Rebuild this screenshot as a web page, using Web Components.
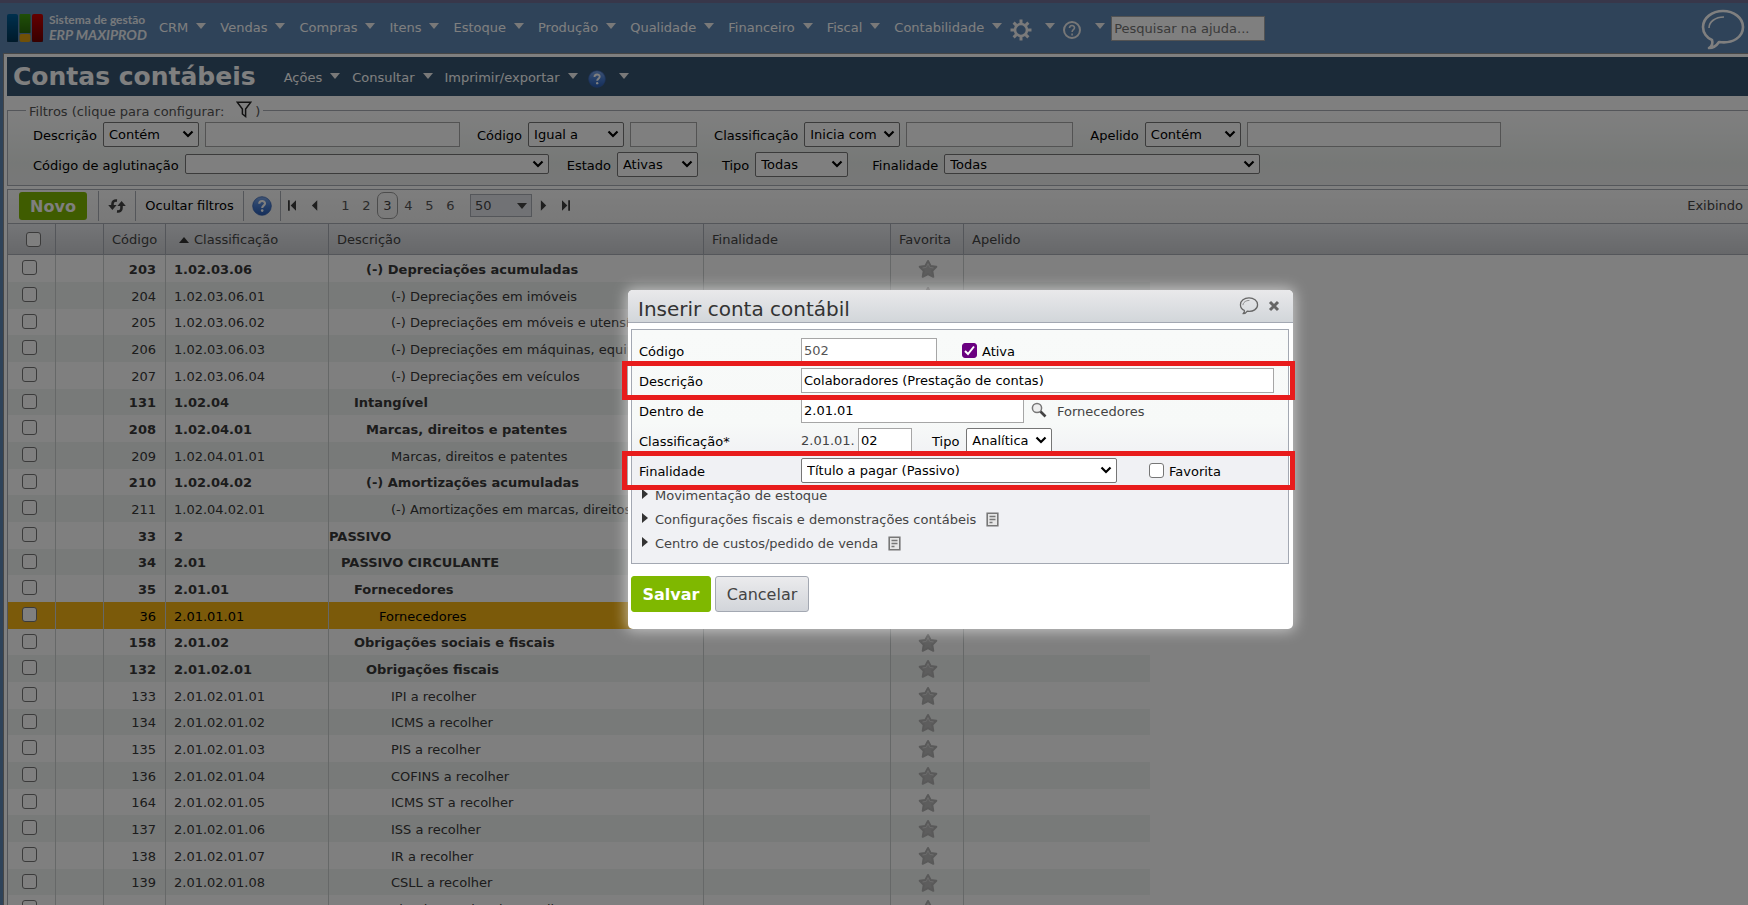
<!DOCTYPE html>
<html lang="pt-BR">
<head>
<meta charset="utf-8">
<title>Contas contábeis</title>
<style>
html,body{margin:0;height:100%;overflow:hidden}
body{font-family:"DejaVu Sans",Verdana,sans-serif;font-size:13px;color:#000;background:#5e86b2}
</style>
</head>
<body>
<erp-app></erp-app>
<script>
const FIELD_CSS = `
*{box-sizing:border-box}
input,select,button{font:inherit;color:inherit;margin:0}
input[type=text],input[type=search]{border:1px solid #a6a6a6;background:#fff;height:25px;padding:0 2px;border-radius:0;outline:0}
.sel{display:inline-grid;height:25px;align-items:center}
.sel>*{grid-area:1/1}
.sel select{appearance:none;width:100%;height:100%;border:1px solid #767676;border-radius:2px;background:#fff;color:#000;padding:0 18px 0 5px;outline:0}
.sel svg{justify-self:end;margin-right:5px;width:12px;height:8px;pointer-events:none}
.sel.low{height:20px}
input[type=checkbox]{appearance:none;width:15px;height:15px;border:1px solid #767676;border-radius:3px;background:#fff;display:grid;place-items:center;flex:none}
`;
const CHEV = `<svg viewBox="0 0 12 8" aria-hidden="true"><path d="M1.5 1.5 6 6l4.5-4.5" fill="none" stroke="#000" stroke-width="2.2"/></svg>`;
const HELP = `<svg viewBox="0 0 20 20" width="100%" height="100%" aria-hidden="true"><defs><linearGradient id="g" x2="0" y2="1"><stop stop-color="#7ea6e6"/><stop offset=".5" stop-color="#4a7fd4"/><stop offset="1" stop-color="#2a5cb4"/></linearGradient></defs><circle cx="10" cy="10" r="9.3" fill="url(#g)" stroke="#3a66b4" stroke-width=".8"/><path d="M7.2 7.8c0-3.6 5.8-3.6 5.8-.3 0 2.1-2.8 2.2-2.8 4.4" fill="none" stroke="#fff" stroke-width="2.1"/><circle cx="10.2" cy="14.6" r="1.3" fill="#fff"/></svg>`;
const BUBBLE = `<svg viewBox="0 0 44 42" width="100%" height="100%" aria-hidden="true"><path d="M22 2C11 2 2 9 2 18c0 6 4 11 9 13 1 3 0 6-3 8 5 0 8-3 10-6 14 2 24-5 24-15C42 9 33 2 22 2z" fill="none" stroke="currentColor" stroke-width="var(--stroke,2.6)" stroke-linejoin="round"/><path d="M8 19c0-6 6-11 15-11" fill="none" stroke="currentColor" stroke-width="1.6"/></svg>`;
const NOTE = `<svg class="note" viewBox="0 0 13 15" aria-hidden="true"><path d="M1.2 1.2h10.6v12.6H1.2z" fill="#e6e6e6" stroke="#777" stroke-width="1.6"/><path d="M3.5 4.5h6M3.5 7.5h6M3.5 10.5h3" stroke="#777" stroke-width="1.4"/></svg>`;

function define(name, render) {
  customElements.define(name, class extends HTMLElement {
    connectedCallback() {
      if (this.shadowRoot) return;
      this.attachShadow({ mode: 'open' }).innerHTML = render(this);
    }
  });
}
const options = list => list.split('|').map(o => `<option>${o}</option>`).join('');

/* Menu entry: slotted label or icon, followed by a drop arrow */
define('menu-item', () => `<style>
:host{display:block;color:#fff}
a{display:flex;align-items:center;gap:8px;color:inherit;text-decoration:none;line-height:18px;white-space:nowrap}
i{width:0;height:0;border:5px solid transparent;border-top:6px solid #f2f2f2;border-bottom:0;margin-bottom:4px}
:host([wide]) a{gap:13px}
</style><a href="#"><slot></slot><i></i></a>`);

define('erp-logo', () => `<style>
:host{display:flex;align-items:center;gap:6px;width:136px;color:#fff;font-family:Lato,sans-serif;font-weight:700}
svg{width:36px;height:28px;flex:none}
div{font-size:12px;line-height:15px;white-space:nowrap;opacity:.9;margin-top:-3px}
em{display:block;font-size:14px}
</style><svg viewBox="0 0 36 28" aria-hidden="true"><defs><linearGradient id="d" x2="0" y2="1"><stop stop-opacity="0"/><stop offset="1" stop-opacity=".45"/></linearGradient></defs><rect width="11" height="28" rx="2" fill="#00609c"/><rect x="12.500" width="11" height="19" rx="1" fill="#3f9d10"/><rect x="12.500" y="20" width="11" height="8" rx="2" fill="#e0a010"/><rect x="25" width="11" height="28" rx="2" fill="#c80000"/><path d="M0 0h11v28H0zM12.500 0h11v19h-11zM25 0h11v28H25z" fill="url(#d)"/></svg><div>Sistema de gestão<em>ERP MAXIPROD</em></div>`);

define('top-nav', () => `<style>${FIELD_CSS}
:host{display:flex;align-items:center;height:53px;box-sizing:border-box;border-top:3px solid #706f94;background:#5e86b2;padding:0 3px 0 7px}
nav{display:flex;align-items:center;gap:14px;margin-left:16px}
.gear{width:22px;height:22px;margin:4px 0 0 -6px}.q{width:20px;height:20px;margin:4px 0 0 -7px}
input[type=search]{width:154px;margin-left:-8px}
input::placeholder{color:#757575;opacity:1}
.chat{margin-left:auto;width:44px;height:42px;margin-top:4px;color:#fff;background:none;border:0;padding:0}
</style><erp-logo></erp-logo><nav>
${['CRM','Vendas','Compras','Itens','Estoque','Produção','Qualidade','Financeiro','Fiscal','Contabilidade'].map(t=>`<menu-item>${t}</menu-item>`).join('')}
<menu-item wide><svg class="gear" viewBox="0 0 22 22" aria-label="Configurações"><circle cx="11" cy="11" r="6" fill="none" stroke="#f4f4f4" stroke-width="2.600"/><path d="M11 .5v4M11 17.500v4M.5 11h4M17.500 11h4M3.600 3.600l2.800 2.800M15.600 15.600l2.800 2.800M18.400 3.600l-2.800 2.800M6.400 15.600l-2.800 2.800" stroke="#f4f4f4" stroke-width="3"/></svg></menu-item>
<menu-item wide><svg class="q" viewBox="0 0 20 20" aria-label="Ajuda"><circle cx="10" cy="10" r="8" fill="none" stroke="#eee" stroke-width="2"/><path d="M7.500 8c0-3.300 5-3.300 5-.3 0 2-2.400 2-2.400 4.300M10.100 13.500v2" fill="none" stroke="#eee" stroke-width="1.600"/></svg></menu-item>
<input type="search" placeholder="Pesquisar na ajuda..." aria-label="Pesquisar na ajuda">
</nav><button class="chat" aria-label="Mensagens">${BUBBLE}</button>`);

define('page-bar', () => `<style>
:host{display:flex;align-items:center;height:39px;background:#365470;color:#fff;padding-left:6px}
h1{margin:0;font-size:25px;line-height:39px;font-weight:700;white-space:nowrap}
nav{display:flex;align-items:center;gap:12px;margin:2px 0 0 28px}
.h{width:18px;height:18px;margin:2px 0 0 -2px;display:block}
</style><h1>Contas contábeis</h1><nav><menu-item>Ações</menu-item><menu-item>Consultar</menu-item><menu-item>Imprimir/exportar</menu-item><menu-item wide><span class="h">${HELP}</span></menu-item></nav>`);

/* Filter: label, operator or value select, optional text box */
define('filter-field', el => {
  const label = el.getAttribute('label'), box = el.getAttribute('box');
  return `<style>${FIELD_CSS}
:host{display:flex;align-items:center;gap:6px;height:26px}
label{white-space:nowrap;padding-top:2px}
</style><label for="s">${label}</label><span class="sel ${el.hasAttribute('low')?'low':''}" style="width:${el.getAttribute('w')}px"><select id="s">${options(el.getAttribute('options')||'')}</select>${CHEV}</span>${box?`<input type="text" aria-label="${label}" style="width:${box}px">`:''}`;
});

define('filter-panel', () => `<style>
:host{display:block}
fieldset{margin:5px 0 0;border:1px solid #a9acb4;border-right:0;padding:1px 0 8px 25px;min-width:0;background:linear-gradient(#fff,#f8faf9 30%,#edf1ee 70%,#f0f1f1)}
legend{margin-left:-7px;padding:2px 3px 0;line-height:17px;height:17px;color:#555;display:flex;gap:12px}
legend svg{width:16px;height:17px;margin-top:-2px}
legend span{margin-left:-9px}
div{display:flex;gap:17px}
div+div{margin-top:4px}
.l{gap:18px}
.t{margin-left:6px}
</style><fieldset><legend>Filtros (clique para configurar: <svg viewBox="0 0 16 17" aria-hidden="true"><path d="M1.200 1.200h13.600L9.600 8v7.500L6.400 13V8z" fill="none" stroke="#222" stroke-width="1.500"/></svg><span>)</span></legend>
<div><filter-field label="Descrição" w="96" box="255" options="Contém"></filter-field><filter-field label="Código" w="96" box="67" options="Igual a"></filter-field><filter-field label="Classificação" w="96" box="167" options="Inicia com"></filter-field><filter-field label="Apelido" w="96" box="254" options="Contém"></filter-field></div>
<div class="l"><filter-field low label="Código de aglutinação" w="364"></filter-field><filter-field label="Estado" w="81" options="Ativas"></filter-field><filter-field class="t" label="Tipo" w="93" options="Todas"></filter-field><filter-field class="t" low label="Finalidade" w="316" options="Todas"></filter-field></div></fieldset>`);

define('grid-toolbar', () => `<style>${FIELD_CSS}
:host{display:flex;align-items:center;height:34px;box-sizing:border-box;margin-top:3px;border:1px solid #a9acb4;border-width:1px 0 0 1px;background:linear-gradient(#fcfcfc,#f2f2f2);padding:0 5px 2px 11px}
button{border:0;background:none;padding:0;display:block;white-space:nowrap}
.new{width:68px;height:28px;border-radius:3px;background:#7fb800;color:#fff;font-size:16px;font-weight:700;padding-top:2px}
.g{height:30px;display:flex;align-items:center;border-right:1px solid #a9acb4}
.g.a{width:12px}.g.b{width:37px;justify-content:center}.g.c{width:108px;justify-content:center}
.help{width:20px;height:20px}
.i{width:8px;height:11px}.i svg,.r svg{display:block;width:100%;height:100%}
.r{width:18px;height:14px}
nav{display:flex;margin:0 9px 0 16px}
nav a{width:21px;height:27px;line-height:27px;text-align:center;color:#555;text-decoration:none}
nav a[aria-current]{border:1px solid #999;border-radius:7px;line-height:25px;color:#444}
.page{width:62px;height:23px;margin-right:8px}
.page select{background:#e3e5ea;border-color:#a9acb4;border-radius:0;color:#444;padding-left:4px}
.page i{justify-self:end;margin-right:5px;border:5px solid transparent;border-top:6px solid #444;border-bottom:0;pointer-events:none}
.total{margin-left:auto;color:#444}
</style><button class="new">Novo</button><span class="g a"></span><span class="g b"><button class="r" aria-label="Atualizar"><svg viewBox="0 0 18 14"><path d="M9 1.600C6 1.200 4.500 2.500 4.500 5v2M9 12.400c3 .4 4.500-.9 4.500-3.400V7" fill="none" stroke="#444" stroke-width="2.600"/><path d="M.2 6h8.400l-4.200 5zM9.400 7h8.400l-4.200-5z" fill="#444"/></svg></button></span><span class="g c"><button>Ocultar filtros</button></span><span class="g b"><button class="help" aria-label="Ajuda">${HELP}</button></span>
<button class="i" style="margin:0 15px 0 7px" aria-label="Primeira"><svg viewBox="0 0 9 12"><path d="M0 0h2v12H0zM9 0v12L3 6z" fill="#3c3c3c"/></svg></button><button class="i" aria-label="Anterior"><svg viewBox="0 0 9 12"><path d="M7 0v12L1 6z" fill="#3c3c3c"/></svg></button>
<nav>${[1,2,3,4,5,6].map(n=>`<a href="#"${n==3?' aria-current="page"':''}>${n}</a>`).join('')}</nav>
<span class="sel page"><select aria-label="Linhas por página"><option>50</option></select><i></i></span><button class="i" style="margin-right:14px" aria-label="Próxima"><svg viewBox="0 0 9 12"><path d="M1 0v12l6-6z" fill="#3c3c3c"/></svg></button><button class="i" aria-label="Última"><svg viewBox="0 0 9 12"><path d="M7 0h2v12H7zM0 0v12l6-6z" fill="#3c3c3c"/></svg></button><span class="total">Exibindo</span>`);

const ROWS = [
 [203,'1.02.03.06',3,'(-) Depreciações acumuladas',1],[204,'1.02.03.06.01',5,'(-) Depreciações em imóveis'],[205,'1.02.03.06.02',5,'(-) Depreciações em móveis e utensílios'],[206,'1.02.03.06.03',5,'(-) Depreciações em máquinas, equipamentos'],[207,'1.02.03.06.04',5,'(-) Depreciações em veículos'],[131,'1.02.04',2,'Intangível',1],[208,'1.02.04.01',3,'Marcas, direitos e patentes',1],[209,'1.02.04.01.01',5,'Marcas, direitos e patentes'],[210,'1.02.04.02',3,'(-) Amortizações acumuladas',1],[211,'1.02.04.02.01',5,'(-) Amortizações em marcas, direitos'],[33,'2',0,'PASSIVO',1],[34,'2.01',1,'PASSIVO CIRCULANTE',1],[35,'2.01.01',2,'Fornecedores',1],[36,'2.01.01.01',4,'Fornecedores'],[158,'2.01.02',2,'Obrigações sociais e fiscais',1],[132,'2.01.02.01',3,'Obrigações fiscais',1],[133,'2.01.02.01.01',5,'IPI a recolher'],[134,'2.01.02.01.02',5,'ICMS a recolher'],[135,'2.01.02.01.03',5,'PIS a recolher'],[136,'2.01.02.01.04',5,'COFINS a recolher'],[164,'2.01.02.01.05',5,'ICMS ST a recolher'],[137,'2.01.02.01.06',5,'ISS a recolher'],[138,'2.01.02.01.07',5,'IR a recolher'],[139,'2.01.02.01.08',5,'CSLL a recolher'],[188,'2.01.02.01.09',5,'Simples Nacional a recolher']];
const INDENT = [0,12,25,37,50,62];
const STAR = `<svg viewBox="0 0 20 20" aria-hidden="true"><path d="M10 2l2.700 5 5.600.8-4 4.100 1 5.900L10 15.200l-5.300 2.600 1-5.900-4-4.100L7.300 7z" fill="#bababa" stroke="#b2b2b2" stroke-width="2" stroke-linejoin="round"/><path d="M10 4.500 8.300 8.300 4.500 9M10 4.500l1.700 3.800 3.800.7" fill="none" stroke="#d6d6d6"/></svg>`;

define('accounts-grid', () => `<style>${FIELD_CSS}
:host{display:block;border-left:1px solid #a9acb4}
table{width:100%;table-layout:fixed;border-spacing:0;color:#383838}
th{height:32px;padding:0 8px;border:1px solid #a9acb4;border-width:1px 0 1px 1px;font-weight:400;text-align:left;white-space:nowrap;background:linear-gradient(#e9ebef,#ced0d4);color:#444}
th:first-child,td:first-child{border-left:0}
th:first-child input{margin-left:10px}
td{height:27px;padding:2px 8px 0;border-left:1px solid #ccd0d0;white-space:nowrap;overflow:hidden;line-height:16px}
tr:nth-child(3n) td{height:26px}
tbody tr:nth-child(even) td{background:#f0f4f2}
td:first-child{padding:0 0 2px 14px}
.n{text-align:right}
td.n{padding-right:9px}
td.d{padding-left:0}
td.s{padding:1px 0 0 1px;text-align:center}.s svg{width:20px;height:20px;display:block;margin:auto}
tbody td.f{border:0;background:#fff!important}
tr.b{font-weight:700}
tbody tr.on td:not(.f){background:#f6b414;color:#000}
th i{display:inline-block;border:5px solid transparent;border-bottom:6px solid #333;border-top:0;margin:0 5px 1px 5px}
</style><table><colgroup>${[47,48,62,163,375,187,73,187].map(w=>`<col style="width:${w}px">`).join('')}<col></colgroup>
<thead><tr><th><input type="checkbox" aria-label="Selecionar todas"></th><th></th><th class="n">Código</th><th><i></i>Classificação</th><th>Descrição</th><th>Finalidade</th><th>Favorita</th><th colspan="2">Apelido</th></tr></thead>
<tbody>${ROWS.map(([n,c,l,d,b])=>`<tr class="${b?'b':''}${n==36?'on':''}"><td><input type="checkbox" aria-label="Selecionar ${n}"></td><td></td><td class="n">${n}</td><td>${c}</td><td class="d"><span style="margin-left:${INDENT[l]}px">${d}</span></td><td></td><td class="s">${STAR}</td><td></td><td class="f"></td></tr>`).join('')}</tbody></table>`);

/* Collapsed section heading */
define('fold-line', el => `<style>
:host{display:flex;align-items:center;gap:10px;height:24px;box-sizing:border-box;padding:0 0 3px 10px;color:#444}
button{font:inherit;color:inherit;background:none;border:0;padding:0;display:flex;align-items:center;gap:7px}
i{border:5px solid transparent;border-left:6px solid #333;border-right:0;margin-bottom:3px}
.note{width:13px;height:15px}
</style><button aria-expanded="false"><i></i><slot></slot></button>${el.hasAttribute('note')?NOTE:''}`);

define('account-dialog', () => `<style>${FIELD_CSS}
:host{position:absolute;top:290px;left:calc(50% - 246px);width:665px;box-sizing:border-box;padding-bottom:17px;background:#fff;border-radius:5px;box-shadow:0 0 14px 2px rgba(255,255,255,.55)}
header{display:flex;align-items:center;height:33px;box-sizing:border-box;padding:0 13px 0 10px;border-bottom:1px solid #a3a8b2;border-radius:5px 5px 0 0;background:linear-gradient(#e9e9eb,#d2d6da);color:#333}
h2{margin:0 auto 0 0;font-size:20px;font-weight:400;line-height:28px;padding-top:5px}
header button{border:0;background:none;padding:0;width:20px;height:18px;color:#666;--stroke:3}
header button+button{width:12px;height:12px;margin-left:9px}
header svg{display:block}
form{margin:6px 4px 0 3px;border:1px solid #a3a8b2;padding:5px 0 6px;background:linear-gradient(#f8faf9 0,#f7f9f8 40%,#f0f1f4 55%,#f0f1f4)}
.row{position:relative;display:flex;align-items:center;height:30px;padding-left:7px}
.row>label:first-child{width:162px}
label,.txt{white-space:nowrap;padding-top:3px}
.txt.pre{width:57px;padding-top:0}
.mark::after{content:"";position:absolute;inset:-4px -7px -5px -10px;border:5px solid #e81c1c;z-index:1;pointer-events:none}
input#ativa{background:#6a0080;border-color:#6a0080}
.ck{display:grid}.ck>*{grid-area:1/1}.ck svg{width:15px;height:15px;pointer-events:none}
.ck+label{margin-left:5px}
.txt{color:#444}
footer{display:flex;gap:4px;margin:12px 0 0 3px}
footer button{height:36px;border:1px solid #a3a8b2;border-radius:3px;background:linear-gradient(#ebebed,#d2d5da);font-size:16px;color:#444;width:94px;padding:0}
footer .save{background:#7fb800;border-color:#7fb800;color:#fff;font-weight:700;width:80px}
</style><header><h2>Inserir conta contábil</h2><button aria-label="Comentar">${BUBBLE}</button><button aria-label="Fechar"><svg viewBox="0 0 12 12"><path d="M2 2l8 8M10 2l-8 8" stroke="#666" stroke-width="3"/></svg></button></header>
<form>
<div class="row"><label for="cod">Código</label><input id="cod" type="text" value="502" style="width:136px;color:#555"><span class="ck" style="margin-left:25px"><input id="ativa" type="checkbox" checked><svg viewBox="0 0 15 15"><path d="M3 8l3 3 6-7.500" fill="none" stroke="#fff" stroke-width="2"/></svg></span><label for="ativa">Ativa</label></div>
<div class="row mark"><label for="desc">Descrição</label><input id="desc" type="text" value="Colaboradores (Prestação de contas)" style="width:473px"></div>
<div class="row"><label for="pai">Dentro de</label><input id="pai" type="text" value="2.01.01" style="width:223px"><svg style="width:16px;height:16px;margin:0 10px 0 7px" viewBox="0 0 16 16" aria-hidden="true"><circle cx="6" cy="6" r="4.600" fill="#eee" stroke="#777" stroke-width="1.500"/><path d="M9.500 9.500l5 5" stroke="#444" stroke-width="2.600"/></svg><span class="txt">Fornecedores</span></div>
<div class="row"><label for="cls">Classificação*</label><span class="txt pre">2.01.01.</span><input id="cls" type="text" value="02" style="width:54px"><label for="tipo" style="margin:0 7px 0 20px">Tipo</label><span class="sel" style="width:86px"><select id="tipo"><option>Analítica</option></select>${CHEV}</span></div>
<div class="row mark"><label for="fin">Finalidade</label><span class="sel" style="width:316px"><select id="fin"><option>Título a pagar (Passivo)</option></select>${CHEV}</span><span class="ck" style="margin-left:32px"><input id="fav" type="checkbox"></span><label for="fav">Favorita</label></div>
<fold-line>Movimentação de estoque</fold-line><fold-line note>Configurações fiscais e demonstrações contábeis</fold-line><fold-line note>Centro de custos/pedido de venda</fold-line>
</form><footer><button class="save">Salvar</button><button>Cancelar</button></footer>`);

define('erp-app', () => `<style>
:host{display:block;position:relative;height:100vh;overflow:hidden}
main{margin-left:3px;padding:3px 0 0 3px;border:1px solid #8c8c8c;border-width:1px 0 0 1px;background:#fff;min-height:100vh}
.shade{position:absolute;inset:0;background:rgba(0,0,0,.5)}
</style><top-nav></top-nav><main><page-bar></page-bar><filter-panel></filter-panel><grid-toolbar></grid-toolbar><accounts-grid></accounts-grid></main><div class="shade"></div><account-dialog role="dialog" aria-label="Inserir conta contábil"></account-dialog>`);
</script>
</body>
</html>
